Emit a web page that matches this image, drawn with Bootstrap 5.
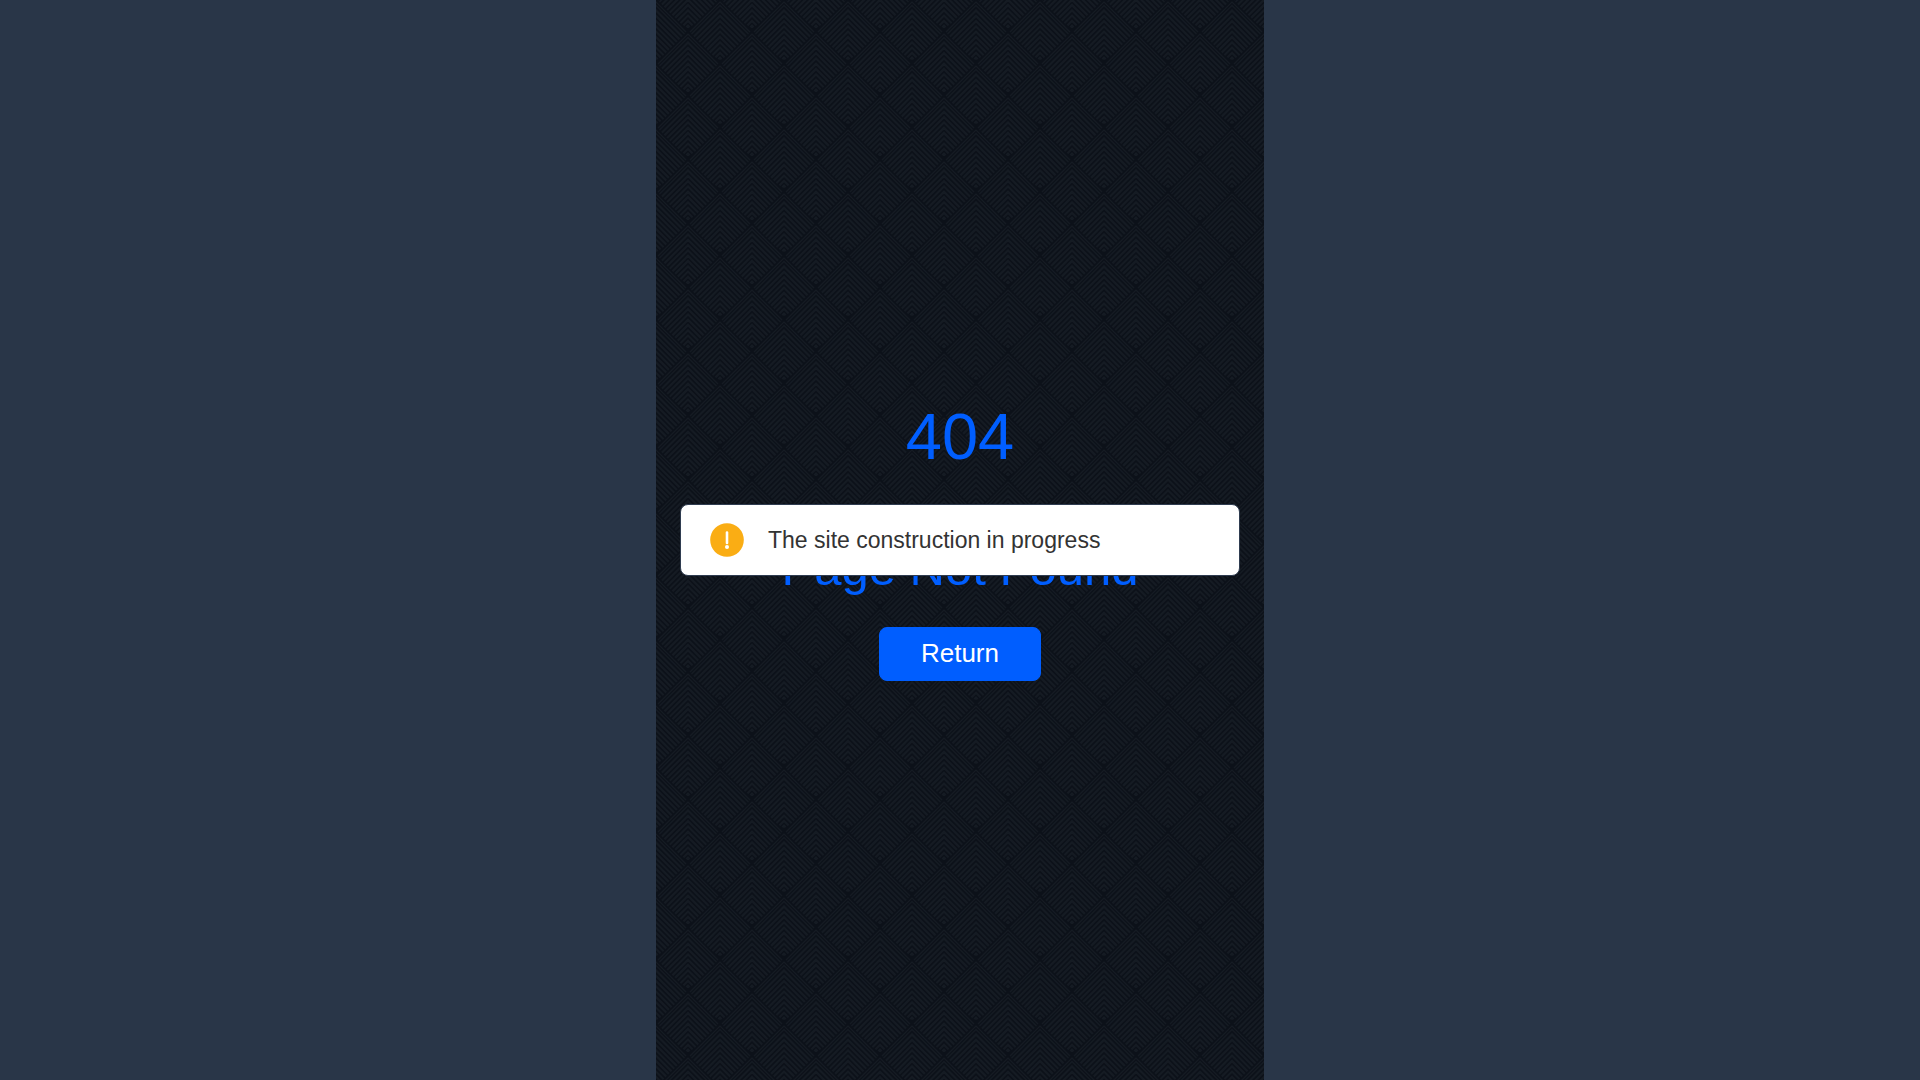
<!DOCTYPE html>
<html lang="en">
<head>
<meta charset="utf-8">
<meta name="viewport" content="width=device-width, initial-scale=1">
<title>404</title>
<link href="https://cdn.jsdelivr.net/npm/bootstrap@5.3.0/dist/css/bootstrap.min.css" rel="stylesheet">
<style>
  body { background: #293648; font-family: "Liberation Sans", Arial, sans-serif; }
  .app-shell { max-width: 608px; background: #0c1119; color: #005eff; }
  .app-pattern { z-index: 0; }
  .error-code { font-size: 65px; line-height: 76px; }
  .error-text { font-size: 49px; line-height: 58px; margin-bottom: 30px; }
  .btn-return { --bs-btn-bg: #005eff; --bs-btn-color: #fff; --bs-btn-border-color: #005eff; --bs-btn-hover-bg: #004fd6; --bs-btn-hover-color: #fff;
    width: 162px; height: 54px; padding: 0 12px 2px; font-size: 26px; line-height: 1; border-radius: 8px; }
  .notice-wrap { max-width: 608px; padding: 0 24px; z-index: 2; }
  .notice { min-height: 72px; padding: 0 29px; gap: 24px; color: #333; font-size: 23px; line-height: 32px; border: 1px solid #2f3c50; border-radius: 8px; }
</style>
</head>
<body>
<main class="app-shell position-relative min-vh-100 mx-auto d-flex flex-column align-items-center justify-content-center text-center">
  <svg class="app-pattern position-absolute top-0 start-0 w-100 h-100" aria-hidden="true">
    <defs>
      <g id="scale" fill="none" stroke="#151b23">
        <path d="M-30 33 0 3 30 33" stroke-width="1.200"/>
        <path d="M-28.500 35 0 6.500 28.500 35" stroke-width="1.200"/>
        <path d="M-26 37.500 0 11.500 26 37.500M-23.500 40.300 0 16.800 23.500 40.300M-20.800 42.900 0 22.100 20.800 42.900M-18.200 45.600 0 27.400 18.200 45.600M-15.500 48.200 0 32.700 15.500 48.200M-12.800 50.800 0 38 12.800 50.800M-10.200 53.500 0 43.300 10.200 53.500M-7.500 56.100 0 48.600 7.500 56.100M-4.500 58.400 0 53.900 4.500 58.400M-1.500 60.200 0 58.700 1.500 60.200" stroke-width="2"/>
      </g>
      <pattern id="scales" width="64" height="64" patternUnits="userSpaceOnUse">
        <use href="#scale" x="32" y="31"/><use href="#scale" x="32" y="-33"/>
        <use href="#scale" x="0" y="-1"/><use href="#scale" x="64" y="-1"/>
        <use href="#scale" x="0" y="63"/><use href="#scale" x="64" y="63"/>
      </pattern>
    </defs>
    <rect width="100%" height="100%" fill="url(#scales)"/>
  </svg>
  <div class="position-relative d-flex flex-column align-items-center">
    <h1 class="error-code fw-normal mb-5">404</h1>
    <p class="error-text mt-3">Page Not Found</p>
    <button type="button" class="btn btn-return">Return</button>
  </div>
</main>
<div class="notice-wrap position-fixed top-50 start-50 translate-middle w-100">
  <div class="notice bg-white d-flex align-items-center" role="alert">
    <svg width="34" height="34" viewBox="0 0 34 34" aria-hidden="true">
      <circle cx="17" cy="17" r="16.800" fill="#faad14"/>
      <path d="M17 9.500V20" stroke="#fff" stroke-width="2.600" stroke-linecap="round"/>
      <circle cx="17" cy="24" r="2" fill="#fff"/>
    </svg>
    <span>The site construction in progress</span>
  </div>
</div>
<script src="https://cdn.jsdelivr.net/npm/bootstrap@5.3.0/dist/js/bootstrap.bundle.min.js"></script>
</body>
</html>
